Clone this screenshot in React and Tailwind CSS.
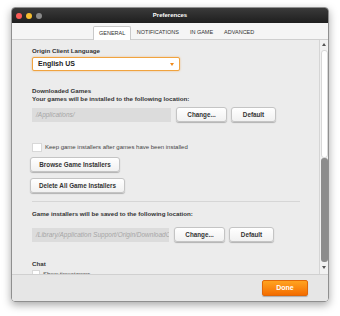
import React from 'react';

const font = { fontFamily: '"Liberation Sans", Arial, sans-serif' };

const MacButton = ({ children, className = '' }) => (
  <button
    className={`flex items-center justify-center h-[15px] rounded-[3px] border border-[#c4c4c4] bg-gradient-to-b from-white to-[#f1f1f1] shadow-[0_1px_1px_rgba(0,0,0,0.25)] text-[6.3px] leading-[8px] font-bold text-[#333] ${className}`}
  >
    {children}
  </button>
);

const PathRow = ({ path, width }) => (
  <div className="flex items-center">
    <div className={`h-[14px] ${width} bg-[#dcdcdc] flex items-center px-[4px] text-[6.5px] leading-[8px] italic text-[#a6a6a6] overflow-hidden whitespace-nowrap`}>
      {path}
    </div>
    <MacButton className="ml-[5px] w-[51px]">Change...</MacButton>
    <MacButton className="ml-[4px] w-[45px]">Default</MacButton>
  </div>
);

export default function App() {
  const tabs = ['GENERAL', 'NOTIFICATIONS', 'IN GAME', 'ADVANCED'];
  return (
    <div className="w-[340px] h-[316px] bg-white pt-[7px] pl-[11px]" style={font}>
      <div className="w-[318px] h-[295px] rounded-[4px] overflow-hidden flex flex-col border border-[#8f8f8f] shadow-[0_3px_8px_rgba(0,0,0,0.35)]">
        {/* title bar */}
        <div className="h-[15px] bg-gradient-to-b from-[#3a3a3a] to-[#1f1f1f] flex items-center relative">
          <div className="flex gap-[4px] pl-[4px]">
            <span className="w-[6px] h-[6px] rounded-full bg-[#fc5b57]" />
            <span className="w-[6px] h-[6px] rounded-full bg-[#f6be30]" />
            <span className="w-[6px] h-[6px] rounded-full bg-[#8a8a8a]" />
          </div>
          <div className="absolute inset-0 flex items-center justify-center text-white text-[6px] font-bold">Preferences</div>
        </div>

        {/* tabs */}
        <div className="h-[17px] bg-[#f5f5f5] border-b border-[#cfcfcf] flex items-end pl-[81px]">
          {tabs.map((t, i) => (
            <div
              key={t}
              className={`h-[14px] flex items-center text-[5.5px] text-[#333] ${i === 0 ? 'px-[5px] bg-white border border-b-0 border-[#c9c9c9] rounded-t-[2px] -mb-px' : 'px-[5.5px]'}`}
            >
              {t}
            </div>
          ))}
        </div>

        {/* content + scrollbar */}
        <div className="h-[235px] flex bg-[#ececec] border-b border-[#d0d0d0]">
          <div className="flex-1 overflow-hidden pl-[20px] pt-[7px] text-[#333]">
            <div className="text-[6.2px] leading-[8px] font-bold">Origin Client Language</div>
            <div className="mt-[2px] w-[148px] h-[14px] bg-white border border-[#f0a33f] rounded-[2px] shadow-[0_0_2px_rgba(240,150,40,0.6)] flex items-center justify-between px-[5px]">
              <span className="text-[7px] leading-[8px] font-bold text-[#222]">English US</span>
              <span className="w-0 h-0 border-l-[2px] border-r-[2px] border-t-[3px] border-l-transparent border-r-transparent border-t-[#f08a1c]" />
            </div>

            <div className="mt-[16px] text-[6.2px] font-bold leading-[8px]">Downloaded Games</div>
            <div className="text-[6.2px] font-bold leading-[8px]">Your games will be installed to the following location:</div>
            <div className="mt-[4px]">
              <PathRow path="/Applications/" width="w-[139px]" />
            </div>

            <div className="mt-[20px] flex items-center h-[10px]">
              <span className="w-[10px] h-[9px] bg-white border border-[#d8d8d8]" />
              <span className="ml-[3px] text-[6px] leading-[8px] text-[#444]">Keep game installers after games have been installed</span>
            </div>
            <MacButton className="mt-[5px] -ml-[2px] w-[90px]">Browse Game Installers</MacButton>
            <MacButton className="mt-[6px] -ml-[2px] w-[95px]">Delete All Game Installers</MacButton>
            <div className="mt-[8px] h-px bg-[#d6d6d6] w-[268px]" />

            <div className="mt-[8px] text-[6.2px] font-bold leading-[8px]">Game installers will be saved to the following location:</div>
            <div className="mt-[9px]">
              <PathRow path="/Library/Application Support/Origin/DownloadCache" width="w-[137px]" />
            </div>

            <div className="mt-[18px] text-[6.2px] font-bold leading-[8px]">Chat</div>
            <div className="mt-[2px] flex items-center">
              <span className="w-[8px] h-[8px] bg-white border border-[#d8d8d8] relative">
                <span className="absolute right-0 bottom-0 w-[2px] h-[3px] bg-[#f08a1c]" />
              </span>
              <span className="ml-[3px] text-[6px] leading-[8px] text-[#444]">Show timestamps</span>
            </div>
          </div>

          {/* scrollbar */}
          <div className="w-[9px] bg-[#f2f2f2] border-l border-[#d5d5d5] flex flex-col items-center">
            <span className="mt-[3px] w-0 h-0 border-l-[2px] border-r-[2px] border-b-[3px] border-l-transparent border-r-transparent border-b-[#555]" />
            <div className="mt-[4px] w-[7px] h-[108px] rounded-[3px] bg-white border border-[#d8d8d8]" />
            <div className="w-[7px] h-[104px] rounded-[3px] bg-[#8c8c8c]" />
            <span className="mt-[4px] w-0 h-0 border-l-[2px] border-r-[2px] border-t-[3px] border-l-transparent border-r-transparent border-t-[#555]" />
          </div>
        </div>

        {/* footer */}
        <div className="flex-1 bg-[#e6e6e6] flex items-center justify-end pr-[20px]">
          <button className="w-[46px] h-[16px] rounded-[2px] bg-gradient-to-b from-[#ffa31f] to-[#f46d00] border border-[#e0680a] text-white text-[7px] font-bold shadow-[0_1px_1px_rgba(0,0,0,0.25)]">
            Done
          </button>
        </div>
      </div>
    </div>
  );
}
